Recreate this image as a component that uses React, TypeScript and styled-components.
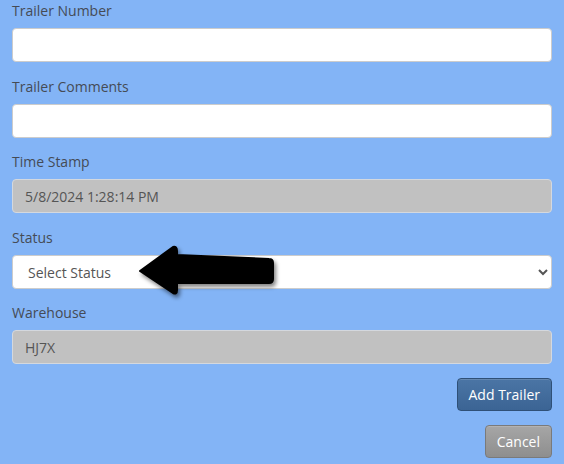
import React from "react";
import styled, { createGlobalStyle } from "styled-components";

const Global = createGlobalStyle`
  html, body { margin: 0; padding: 0; background: #83b4f6; }
  body { font-family: "Open Sans", "Liberation Sans", sans-serif; font-size: 14px; color: #444; }
  * { box-sizing: border-box; }
`;

const Page = styled.form`
  position: relative;
  padding: 0 12px;
  display: flex;
  flex-direction: column;
`;

const Group = styled.div`
  display: flex;
  flex-direction: column;
  margin-bottom: 13.5px;
`;

const Label = styled.label`
  font-size: 14px;
  line-height: 22px;
  margin-bottom: 6px;
  color: #454b55;
`;

const Input = styled.input<{ $disabled?: boolean }>`
  height: 34px;
  width: 100%;
  padding: 6px 12px;
  font-family: inherit;
  font-size: 14px;
  color: #555;
  border: 1px solid ${(p) => (p.$disabled ? "#d4d8de" : "#ccc")};
  border-radius: 4px;
  background: ${(p) => (p.$disabled ? "#c1c1c1" : "#fff")};
  outline: none;
  &:disabled { color: #555; opacity: 1; }
`;

const Select = styled.select`
  height: 34px;
  width: 100%;
  padding: 6px 11px;
  font-family: inherit;
  font-size: 14px;
  color: #555;
  border: 1px solid #ccc;
  border-radius: 4px;
  background: #fff;
  outline: none;
`;

const Actions = styled.div`
  display: flex;
  flex-direction: column;
  align-items: flex-end;
  gap: 14px;
  margin-top: 0.5px;
`;

const Button = styled.button<{ $variant: "primary" | "default" }>`
  height: 33px;
  padding: 0 11px;
  font-family: inherit;
  font-size: 14px;
  color: #fff;
  border-radius: 4px;
  border: 1px solid ${(p) => (p.$variant === "primary" ? "#2f5077" : "#7a7a7a")};
  background: ${(p) =>
    p.$variant === "primary"
      ? "linear-gradient(to bottom, #4b75a5 0%, #3b6494 100%)"
      : "linear-gradient(to bottom, #a6a6a6 0%, #8e8e8e 100%)"};
  box-shadow: inset 0 1px 0 rgba(255,255,255,0.15);
`;

const Arrow = styled.svg`
  position: absolute;
  left: 136px;
  top: 243px;
  pointer-events: none;
  overflow: visible;
`;

export default function App() {
  return (
    <>
      <Global />
      <Page onSubmit={(e) => e.preventDefault()}>
        <Group>
          <Label>Trailer Number</Label>
          <Input type="text" />
        </Group>
        <Group>
          <Label>Trailer Comments</Label>
          <Input type="text" />
        </Group>
        <Group>
          <Label>Time Stamp</Label>
          <Input type="text" $disabled disabled value="5/8/2024 1:28:14 PM" readOnly />
        </Group>
        <Group>
          <Label>Status</Label>
          <Select defaultValue="">
            <option value="">Select Status</option>
          </Select>
        </Group>
        <Group>
          <Label>Warehouse</Label>
          <Input type="text" $disabled disabled value="HJ7X" readOnly />
        </Group>
        <Actions>
          <Button type="button" $variant="primary">Add Trailer</Button>
          <Button type="button" $variant="default">Cancel</Button>
        </Actions>
        <Arrow width="145" height="60" viewBox="0 0 145 60">
          <defs>
            <filter id="sh" x="-20%" y="-30%" width="140%" height="160%">
              <feGaussianBlur in="SourceAlpha" stdDeviation="2" />
              <feOffset dx="2" dy="3" result="b" />
              <feComponentTransfer><feFuncA type="linear" slope="0.5" /></feComponentTransfer>
              <feMerge><feMergeNode /><feMergeNode in="SourceGraphic" /></feMerge>
            </filter>
          </defs>
          <path
            d="M4 28 L37 4 Q41 3 41 8 L41 12 L133 16 Q137 16 137 20 L137 36 Q137 40 133 40 L41 40 L41 47 Q41 52 37 50 Z"
            fill="#000"
            stroke="#000"
            strokeWidth="2"
            strokeLinejoin="round"
            filter="url(#sh)"
          />
        </Arrow>
      </Page>
    </>
  );
}
